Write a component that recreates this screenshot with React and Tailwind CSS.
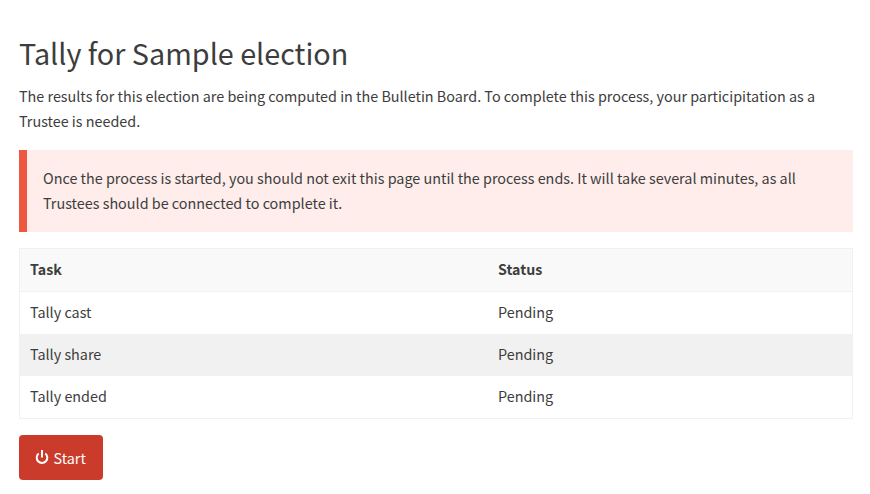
const tasks = [
  { name: "Tally cast", status: "Pending" },
  { name: "Tally share", status: "Pending" },
  { name: "Tally ended", status: "Pending" },
];

function PowerIcon() {
  return (
    <svg
      className="h-[15px] w-[14px] shrink-0"
      viewBox="0 0 14 15"
      fill="none"
      stroke="currentColor"
      strokeWidth="2"
    >
      <path d="M3.7 3.5A5.3 5.3 0 1 0 10.3 3.5" />
      <path d="M7 0V7.5" />
    </svg>
  );
}

export default function App() {
  return (
    <main className="flex h-[494px] w-[870px] flex-col bg-white pl-[19px] pr-[17px] pt-[34px] font-['Noto_Sans_CJK_SC','Noto_Sans',sans-serif] text-[14.37px] leading-[25px] text-[#3d3d3d]">
      <h1 className="h-[38px] text-[28.75px] leading-[38px] whitespace-nowrap">Tally for Sample election</h1>
      <p className="mt-[11px] whitespace-nowrap">
        The results for this election are being computed in the Bulletin Board. To complete this process, your participitation as a
        <br />
        Trustee is needed.
      </p>
      <div className="mt-[17px] h-[82px] border-l-8 border-[#ee583f] bg-[#feedeb] pl-4 pt-[15px] text-[14.38px] whitespace-nowrap">
        Once the process is started, you should not exit this page until the process ends. It will take several minutes, as all
        <br />
        Trustees should be connected to complete it.
      </div>
      <table className="mt-4 w-full table-fixed border-separate border-spacing-0 border border-[#f1f1f1] text-left">
        <thead className="bg-[#f9f9f9] text-[14.2px]">
          <tr className="h-[43px]">
            <th className="w-[468px] border-b border-[#f1f1f1] p-0 pb-px pl-[10px] font-bold">Task</th>
            <th className="border-b border-[#f1f1f1] p-0 pb-px pl-[10px] font-bold">Status</th>
          </tr>
        </thead>
        <tbody>
          {tasks.map((task) => (
            <tr key={task.name} className="h-[42px] even:bg-[#f1f1f1]">
              <td className="p-0 pb-[3px] pl-[10px]">{task.name}</td>
              <td className="p-0 pb-[3px] pl-[10px]">{task.status}</td>
            </tr>
          ))}
        </tbody>
      </table>
      <button className="mt-4 flex h-[45px] w-[84px] items-center gap-[4.5px] rounded-[4px] bg-[#cb3b2b] pl-4 text-white">
        <PowerIcon />
        <span>Start</span>
      </button>
    </main>
  );
}
